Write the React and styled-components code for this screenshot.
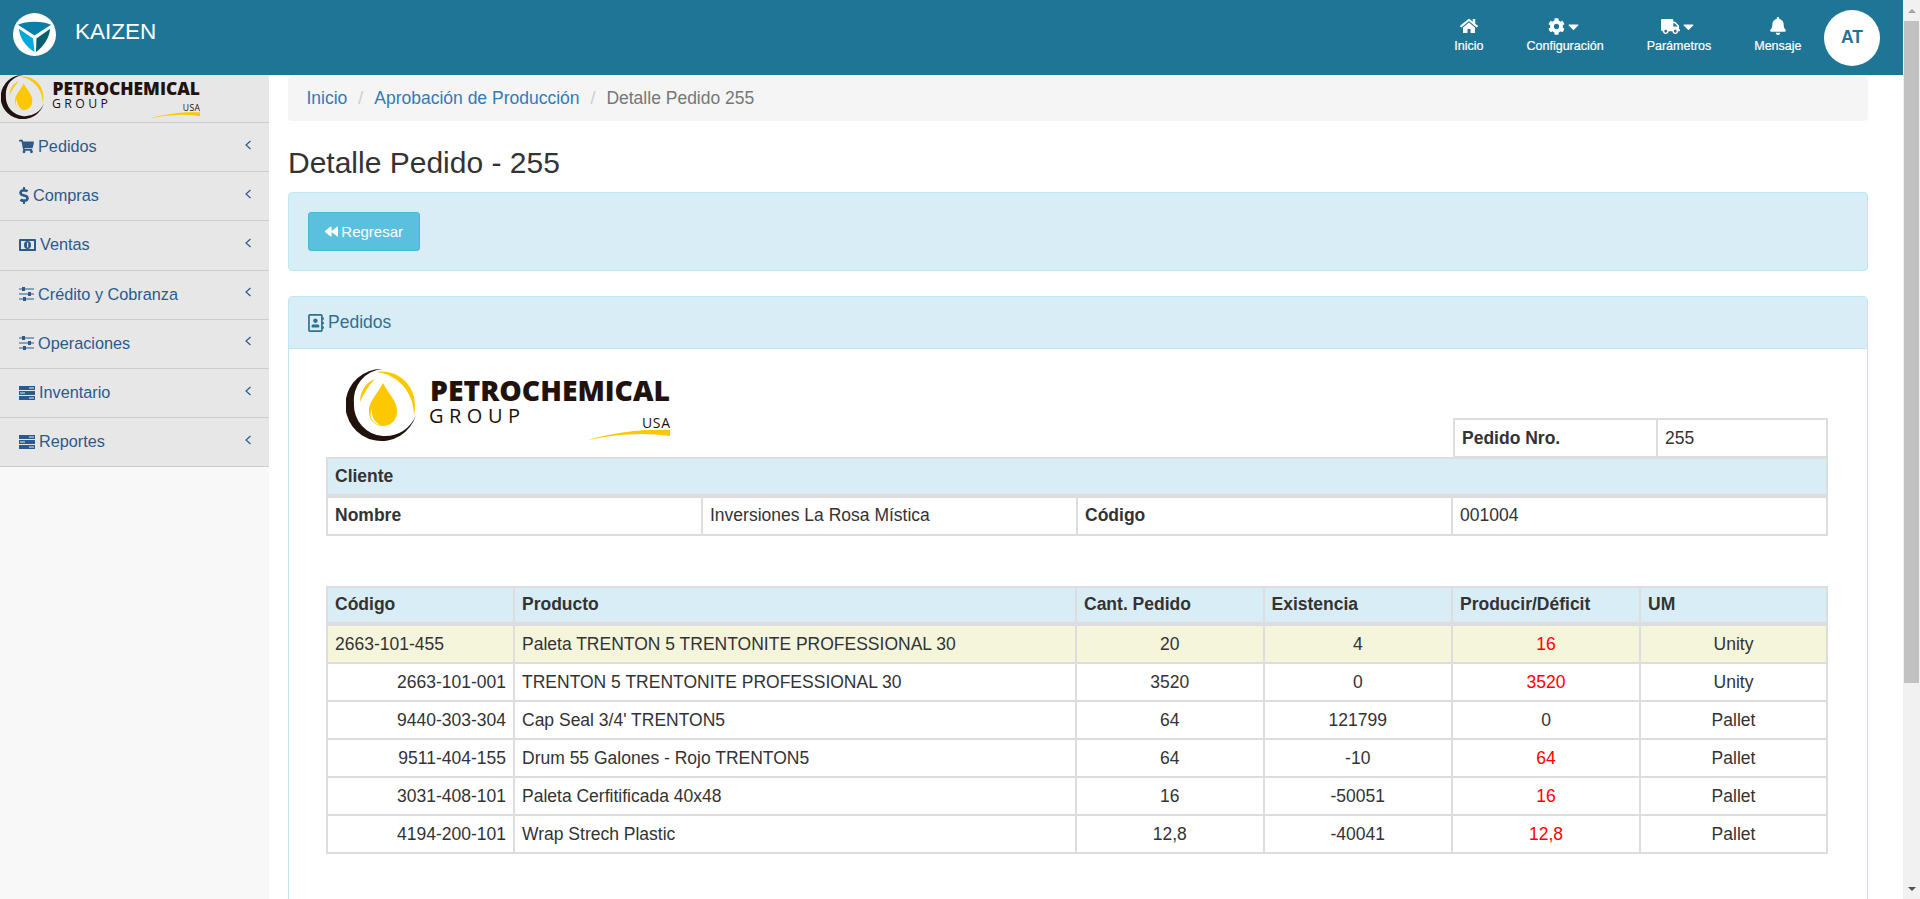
import React from "react";
import styled, { createGlobalStyle } from "styled-components";
import {
  FaBackward,
  FaBell,
  FaCaretDown,
  FaCog,
  FaDollarSign,
  FaHome,
  FaRegAddressBook,
  FaShoppingCart,
  FaTruck,
} from "react-icons/fa";

function MoneyIcon() {
  return (
    <svg width="17" height="12" viewBox="0 0 17 12">
      <rect width="17" height="12" rx="1" fill="#2a5b8c" />
      <rect x="2" y="2" width="13" height="8" fill="#e7e7e7" />
      <ellipse cx="8.5" cy="6" rx="3.5" ry="4" fill="#2a5b8c" />
      <rect x="8" y="3.5" width="1.2" height="5" fill="#e7e7e7" />
    </svg>
  );
}

function SlidersIcon() {
  return (
    <svg width="15" height="14" viewBox="0 0 15 14" fill="#2a5b8c">
      <rect y="1.5" width="15" height="1" />
      <rect x="3" y="0" width="3" height="4" />
      <rect y="6.5" width="15" height="1" />
      <rect x="9" y="5" width="3" height="4" />
      <rect y="11.5" width="15" height="1" />
      <rect x="4" y="10" width="3" height="4" />
    </svg>
  );
}

function StackIcon() {
  return (
    <svg width="16" height="14" viewBox="0 0 16 14" fill="#2a5b8c">
      <rect y="0" width="16" height="4" />
      <rect x="10" y="1.5" width="5" height="1" fill="#e7e7e7" />
      <rect y="5" width="16" height="4" />
      <rect x="1" y="6.5" width="5" height="1" fill="#e7e7e7" />
      <rect y="10" width="16" height="4" />
      <rect x="10" y="11.5" width="5" height="1" fill="#e7e7e7" />
    </svg>
  );
}

function ChevronIcon() {
  return (
    <svg width="6" height="10" viewBox="0 0 6 10" fill="none" stroke="#2a5b8c" strokeWidth="1.2">
      <path d="M5.5 1 L1 5 L5.5 9" />
    </svg>
  );
}

const DollarIcon = styled(FaDollarSign)`
  width: 10px;
  height: 17px;
`;

const menu = [
  { label: "Pedidos", icon: <FaShoppingCart size={15} /> },
  { label: "Compras", icon: <DollarIcon /> },
  { label: "Ventas", icon: <MoneyIcon /> },
  { label: "Crédito y Cobranza", icon: <SlidersIcon /> },
  { label: "Operaciones", icon: <SlidersIcon /> },
  { label: "Inventario", icon: <StackIcon /> },
  { label: "Reportes", icon: <StackIcon /> },
];

const products = [
  { code: "2663-101-455", name: "Paleta TRENTON 5 TRENTONITE PROFESSIONAL 30", qty: "20", stock: "4", make: "16", um: "Unity", main: true },
  { code: "2663-101-001", name: "TRENTON 5 TRENTONITE PROFESSIONAL 30", qty: "3520", stock: "0", make: "3520", um: "Unity" },
  { code: "9440-303-304", name: "Cap Seal 3/4' TRENTON5", qty: "64", stock: "121799", make: "0", um: "Pallet", ok: true },
  { code: "9511-404-155", name: "Drum 55 Galones - Rojo TRENTON5", qty: "64", stock: "-10", make: "64", um: "Pallet" },
  { code: "3031-408-101", name: "Paleta Cerfitificada 40x48", qty: "16", stock: "-50051", make: "16", um: "Pallet" },
  { code: "4194-200-101", name: "Wrap Strech Plastic", qty: "12,8", stock: "-40041", make: "12,8", um: "Pallet" },
];

function KaizenLogo() {
  return (
    <svg width="43" height="43" viewBox="0 0 44 44">
      <circle cx="22" cy="22" r="22" fill="#fff" />
      <path d="M5 12 C13 8 31 8 39 12 L22 23 Z" fill="#0a7ea8" />
      <path d="M6 16 L20.5 26 L22 40 C13 34 7 26 6 16 Z" fill="#00a9dc" />
      <path d="M38 16 L24 26 L23.5 40 C31 34 37 26 38 16 Z" fill="#04606c" />
    </svg>
  );
}

function PetroLogo({ width }) {
  return (
    <svg width={width} viewBox="0 0 324 72">
      <path
        fillRule="evenodd"
        d="M36 0 A36 36 0 1 0 70 46 A33 33 0 0 1 37 67 A31 31 0 0 1 8 34 A31 31 0 0 1 36 0 Z"
        fill="#21120e"
      />
      <path
        d="M30 3 C54 -1 74 20 68 46 C68 24 52 5 30 3 Z M14 33 C14 22 20 13 29 10 C23 16 18 24 14 33 Z"
        fill="#fdc800"
      />
      <path d="M37 14 C43 26 52 33 51 43 A14 14 0 0 1 23 43 C22 33 31 26 37 14 Z" fill="#fdc800" />
      <path d="M26 40 C25 48 29 53 34 56 C27 55 22 47 26 40 Z" fill="#fff" />
      <text x="84" y="32" fontFamily="'Open Sans', 'Liberation Sans', sans-serif" fontWeight="800" fontSize="28" textLength="240" lengthAdjust="spacingAndGlyphs" fill="#21120e">PETROCHEMICAL</text>
      <text x="83" y="54" fontFamily="'Open Sans', 'Liberation Sans', sans-serif" fontSize="20" textLength="91" fill="#21120e">GROUP</text>
      <text x="296" y="59" fontFamily="'Open Sans', 'Liberation Sans', sans-serif" fontSize="14" textLength="28" fill="#21120e">USA</text>
      <path d="M242 71 C268 63 300 60 324 61 L324 67 C298 63 270 65 242 71 Z" fill="#fdc800" />
    </svg>
  );
}

export default function App() {
  return (
    <Frame>
      <GlobalStyle />
      <Page>
        <TopBar>
          <Brand>
            <KaizenLogo />
            <BrandName>KAIZEN</BrandName>
          </Brand>
          <NavList>
            <NavItem>
              <NavIcon><FaHome size={18} /></NavIcon>
              Inicio
            </NavItem>
            <NavItem>
              <NavIcon><FaCog size={17} /><FaCaretDown size={17} /></NavIcon>
              Configuración
            </NavItem>
            <NavItem>
              <NavIcon><FaTruck size={19} /><FaCaretDown size={17} /></NavIcon>
              Parámetros
            </NavItem>
            <NavItem>
              <NavIcon><FaBell size={18} /></NavIcon>
              Mensaje
            </NavItem>
            <Avatar>AT</Avatar>
          </NavList>
        </TopBar>
        <Body>
          <Sidebar>
            <SideLogo>
              <PetroLogo width={199} />
            </SideLogo>
            {menu.map((item) => (
              <MenuItem key={item.label}>
                <MenuLabel>
                  {item.icon}
                  {item.label}
                </MenuLabel>
                <ChevronIcon />
              </MenuItem>
            ))}
          </Sidebar>
          <Main>
            <Breadcrumb>
              <a>Inicio</a>
              <Sep>/</Sep>
              <a>Aprobación de Producción</a>
              <Sep>/</Sep>
              <span>Detalle Pedido 255</span>
            </Breadcrumb>
            <Title>Detalle Pedido - 255</Title>
            <ActionBar>
              <BackButton>
                <FaBackward size={15} />
                Regresar
              </BackButton>
            </ActionBar>
            <Panel>
              <PanelHeading>
                <FaRegAddressBook size={18} />
                Pedidos
              </PanelHeading>
              <PanelBody>
                <DocHead>
                  <LogoSlot>
                    <PetroLogo width={324} />
                  </LogoSlot>
                  <OrderTable>
                    <tbody>
                      <tr>
                        <Th $w={203}>Pedido Nro.</Th>
                        <Td>255</Td>
                      </tr>
                    </tbody>
                  </OrderTable>
                </DocHead>
                <ClientTable>
                  <thead>
                    <tr>
                      <HeadTh colSpan={4}>Cliente</HeadTh>
                    </tr>
                  </thead>
                  <tbody>
                    <tr>
                      <Th $w={376}>Nombre</Th>
                      <Td $w={374}>Inversiones La Rosa Mística</Td>
                      <Th $w={375}>Código</Th>
                      <Td>001004</Td>
                    </tr>
                  </tbody>
                </ClientTable>
                <ProductTable>
                  <thead>
                    <tr>
                      <HeadTh $w={187}>Código</HeadTh>
                      <HeadTh $w={562}>Producto</HeadTh>
                      <HeadTh $w={187.5}>Cant. Pedido</HeadTh>
                      <HeadTh $w={188.5}>Existencia</HeadTh>
                      <HeadTh $w={188}>Producir/Déficit</HeadTh>
                      <HeadTh>UM</HeadTh>
                    </tr>
                  </thead>
                  <tbody>
                    {products.map((p) => (
                      <ProductRow key={p.code} $main={p.main}>
                        <Td $align={p.main ? "left" : "right"}>{p.code}</Td>
                        <Td>{p.name}</Td>
                        <Td $align="center">{p.qty}</Td>
                        <Td $align="center">{p.stock}</Td>
                        <Td $align="center" $red={!p.ok}>{p.make}</Td>
                        <Td $align="center">{p.um}</Td>
                      </ProductRow>
                    ))}
                  </tbody>
                </ProductTable>
              </PanelBody>
            </Panel>
          </Main>
        </Body>
      </Page>
      <Scrollbar>
        <ScrollArrow $up />
        <ScrollThumb />
        <ScrollArrow />
      </Scrollbar>
    </Frame>
  );
}

const GlobalStyle = createGlobalStyle`
  html, body {
    margin: 0;
    height: 100%;
    overflow: hidden;
    background: #fff;
    font-family: "Liberation Sans", Arial, sans-serif;
    font-size: 17.5px;
    line-height: 25px;
    color: #333;
  }
  * {
    box-sizing: border-box;
  }
`;

const Frame = styled.div`
  display: flex;
  height: 899px;
  overflow: hidden;
`;

const Page = styled.div`
  flex: 1;
  min-width: 0;
  display: flex;
  flex-direction: column;
`;

const TopBar = styled.header`
  flex: none;
  height: 75px;
  background: #1e7596;
  display: flex;
  align-items: center;
  justify-content: space-between;
  padding: 0 23px 0 13px;
  color: #fff;
`;

const Brand = styled.div`
  display: flex;
  align-items: center;
  gap: 19px;
  margin-top: -6px;
`;

const BrandName = styled.span`
  font-size: 22.5px;
  margin-top: -6px;
`;

const NavList = styled.nav`
  display: flex;
  align-items: center;
`;

const NavItem = styled.div`
  padding: 0 21.5px;
  display: flex;
  flex-direction: column;
  align-items: center;
  gap: 2px;
  margin-top: -5px;
  font-size: 12.5px;
  line-height: 16px;
  -webkit-text-stroke: 0.2px #fff;
`;

const NavIcon = styled.span`
  display: flex;
  align-items: center;
  height: 19px;
`;

const Avatar = styled.div`
  width: 56px;
  height: 56px;
  border-radius: 50%;
  background: #fff;
  color: #1e7596;
  font-size: 17.5px;
  font-weight: 700;
  display: flex;
  align-items: center;
  justify-content: center;
  margin-left: 1px;
`;

const Body = styled.div`
  flex: 1;
  min-height: 0;
  display: flex;
`;

const Sidebar = styled.aside`
  flex: none;
  width: 269px;
  background: #f8f8f8;
`;

const SideLogo = styled.div`
  height: 48px;
  background: #e7e7e7;
  border-bottom: 1px solid #ccc;
  padding: 0 0 0 1px;
  display: flex;
  align-items: flex-start;
`;

const MenuItem = styled.div`
  height: 49.2px;
  background: #e7e7e7;
  border-bottom: 1px solid #ccc;
  color: #2a5b8c;
  display: flex;
  align-items: center;
  justify-content: space-between;
  padding: 0 18px 5px 19px;
`;

const MenuLabel = styled.span`
  display: flex;
  align-items: center;
  gap: 4px;
  margin-top: 4px;
  font-size: 16.25px;
`;

const Main = styled.main`
  flex: 1;
  min-width: 0;
  padding: 1px 35px 0 19px;
`;

const Breadcrumb = styled.div`
  height: 45px;
  background: #f5f5f5;
  border-radius: 4px;
  display: flex;
  align-items: center;
  padding: 0 18.5px;
  color: #777;
  a {
    color: #337ab7;
  }
`;

const Sep = styled.span`
  color: #ccc;
  padding: 0 11px;
`;

const Title = styled.h1`
  margin: 25px 0 13px;
  font-size: 30px;
  font-weight: 400;
  line-height: 33px;
  color: #333;
`;

const ActionBar = styled.div`
  height: 79px;
  background: #d9edf7;
  border: 1px solid #bce8f1;
  border-radius: 4px;
  padding: 19px;
  margin-bottom: 25px;
`;

const BackButton = styled.button`
  display: inline-flex;
  align-items: center;
  gap: 3px;
  width: 112px;
  height: 39px;
  padding: 0 16px;
  background: #5bc0de;
  border: 1px solid #46b8da;
  border-radius: 3px;
  color: #fff;
  font: inherit;
  font-size: 15px;
`;

const Panel = styled.section`
  border: 1px solid #bce8f1;
  border-radius: 4px;
  height: 700px;
`;

const PanelHeading = styled.div`
  height: 52px;
  background: #d9edf7;
  border-bottom: 1px solid #bce8f1;
  color: #31708f;
  display: flex;
  align-items: center;
  gap: 3px;
  padding: 0 18px;
  font-size: 17.5px;
`;

const PanelBody = styled.div`
  padding: 0 39px 0 37px;
`;

const DocHead = styled.div`
  display: flex;
  align-items: flex-end;
  justify-content: space-between;
  height: 108px;
`;

const LogoSlot = styled.div`
  align-self: flex-start;
  margin: 20px 0 0 20px;
`;

const Grid = styled.table`
  border-collapse: collapse;
  table-layout: fixed;
  width: 100%;
`;

const OrderTable = styled(Grid)`
  width: 375px;
  margin-bottom: -1px;
`;

const ClientTable = styled(Grid)`
  margin-bottom: 50px;
`;

const ProductTable = styled(Grid)``;

const Td = styled.td`
  border: 2px solid #ddd;
  padding: 5.5px 7px;
  line-height: 25px;
  text-align: ${(p) => p.$align || "left"};
  color: ${(p) => (p.$red ? "#f00" : "inherit")};
  width: ${(p) => (p.$w ? `${p.$w}px` : "auto")};
`;

const Th = styled.th`
  border: 2px solid #ddd;
  padding: 5.5px 7px;
  line-height: 25px;
  text-align: left;
  font-weight: 700;
  width: ${(p) => (p.$w ? `${p.$w}px` : "auto")};
`;

const HeadTh = styled(Th)`
  background: #d9edf7;
  border-bottom-width: 4px;
  padding: 4.75px 7px;
`;

const ProductRow = styled.tr`
  background: ${(p) => (p.$main ? "#f5f5dc" : "transparent")};
`;

const Scrollbar = styled.div`
  flex: none;
  width: 17px;
  background: #f1f1f1;
  display: flex;
  flex-direction: column;
  align-items: center;
  padding: 0 1px;
`;

const ScrollArrow = styled.div`
  flex: none;
  height: 21px;
  width: 100%;
  display: flex;
  align-items: center;
  justify-content: center;
  &::after {
    content: "";
    border-left: 4px solid transparent;
    border-right: 4px solid transparent;
    ${(p) => (p.$up ? "border-bottom: 4px solid #a3a3a3;" : "border-top: 4px solid #505050;")}
  }
`;

const ScrollThumb = styled.div`
  width: 100%;
  height: 662px;
  background: #c1c1c1;
  margin-bottom: auto;
`;
